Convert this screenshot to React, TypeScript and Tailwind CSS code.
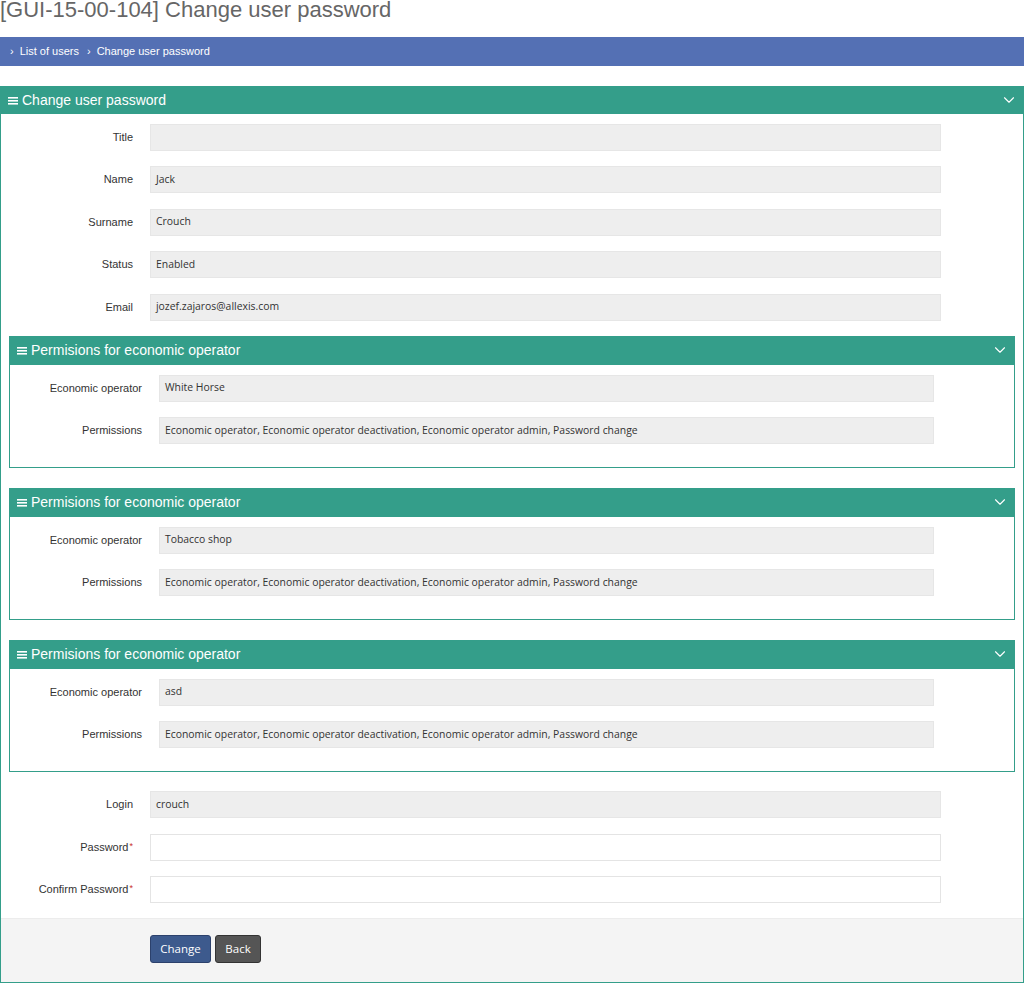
import { ChevronDown } from "lucide-react";

const teal = "bg-[#349e8a]";

function Bars() {
  return (
    <svg width="10" height="9" viewBox="0 0 10 9" className="mr-[4px] shrink-0">
      <rect x="0" y="1" width="10" height="1.6" fill="#fff" />
      <rect x="0" y="4" width="10" height="1.6" fill="#fff" />
      <rect x="0" y="7" width="10" height="1.6" fill="#fff" />
    </svg>
  );
}

function PanelHeader({ title, h }: { title: string; h: string }) {
  return (
    <div className={`${teal} ${h} flex items-center justify-between pl-[8px] pr-[6px] text-white`}>
      <div className="flex items-center text-[14px] font-['Liberation_Sans',Arial,sans-serif]">
        <Bars />
        <span>{title}</span>
      </div>
      <ChevronDown size={18} strokeWidth={1.5} color="#fff" />
    </div>
  );
}

function Row({
  label,
  value,
  editable,
  required,
  right,
}: {
  label: string;
  value?: string;
  editable?: boolean;
  required?: boolean;
  right: string;
}) {
  return (
    <div className={`flex items-center ${right}`}>
      <div className="w-[132px] shrink-0 text-right text-[11px] text-[#333] font-['Liberation_Sans',Arial,sans-serif]">
        {label}
        {required && <span className="text-[9px] text-[#c9302c] relative -top-[2px] ml-[1px]">*</span>}
      </div>
      <div
        className={`ml-[17px] flex h-[27px] flex-1 items-center border pl-[5px] text-[10.4px] text-[#333] font-['Open_Sans','Noto_Sans',sans-serif] ${
          editable ? "border-[#e4e4e4] bg-white" : "border-[#e6e6e6] bg-[#eeeeee]"
        }`}
      >
        {value}
      </div>
    </div>
  );
}

const perms = "Economic operator, Economic operator deactivation, Economic operator admin, Password change";

function OperatorPanel({ name }: { name: string }) {
  return (
    <div className="mx-[8px] border border-[#349e8a]">
      <PanelHeader title="Permisions for economic operator" h="h-[29px] -mx-px -mt-px" />
      <div className="flex flex-col gap-[15.5px] pt-[10px] pb-[22.5px]">
        <Row label="Economic operator" value={name} right="mr-[80px]" />
        <Row label="Permissions" value={perms} right="mr-[80px]" />
      </div>
    </div>
  );
}

export default function App() {
  return (
    <div className="w-[1024px] bg-white font-['Liberation_Sans',Arial,sans-serif]">
      <div className="h-[37px] overflow-hidden">
        <h1 className="-mt-[5px] text-[22px] leading-[30px] text-[#666]">
          [GUI-15-00-104] Change user password
        </h1>
      </div>
      <div className="flex h-[29px] items-center gap-[8px] bg-[#5470b4] pl-[10px] text-[11px] text-white">
        <span className="flex items-center gap-[6px]">
          <span>›</span>
          <span>List of users</span>
        </span>
        <span className="flex items-center gap-[6px]">
          <span>›</span>
          <span>Change user password</span>
        </span>
      </div>

      <div className="mt-[20px] border border-t-0 border-[#349e8a]">
        <PanelHeader title="Change user password" h="h-[28px] -mx-px" />
        <div className="flex flex-col gap-[15.5px] pt-[9.5px]">
          <Row label="Title" value="" right="mr-[82px]" />
          <Row label="Name" value="Jack" right="mr-[82px]" />
          <Row label="Surname" value="Crouch" right="mr-[82px]" />
          <Row label="Status" value="Enabled" right="mr-[82px]" />
          <Row label="Email" value="jozef.zajaros@allexis.com" right="mr-[82px]" />
        </div>
        <div className="mt-[15px] flex flex-col gap-[20px]">
          <OperatorPanel name="White Horse" />
          <OperatorPanel name="Tobacco shop" />
          <OperatorPanel name="asd" />
        </div>
        <div className="mt-[19.5px] flex flex-col gap-[15.5px] pb-[14.5px]">
          <Row label="Login" value="crouch" right="mr-[82px]" />
          <Row label="Password" editable required right="mr-[82px]" />
          <Row label="Confirm Password" editable required right="mr-[82px]" />
        </div>
        <div className="flex h-[64px] gap-[4px] border-t border-[#ececec] bg-[#f4f4f4] pl-[149px] pt-[16px] font-['Open_Sans','Noto_Sans',sans-serif] text-[11.5px] text-white">
          <button className="h-[28px] w-[61px] rounded-[3px] border border-[#2c416c] bg-[#3d5a8d]">Change</button>
          <button className="h-[28px] w-[46px] rounded-[3px] border border-[#333] bg-[#555]">Back</button>
        </div>
      </div>
    </div>
  );
}
